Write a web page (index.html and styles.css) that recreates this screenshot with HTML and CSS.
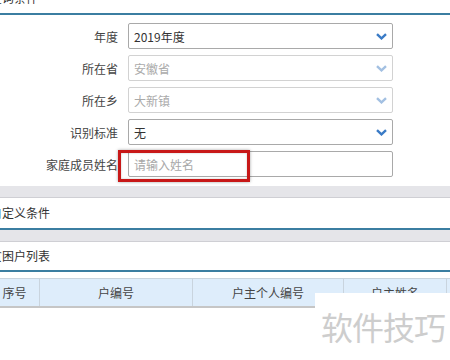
FILE: index.html
```html
<!DOCTYPE html>
<html lang="zh-CN">
<head>
    <meta charset="UTF-8">
    <title>查询条件</title>
    <link rel="stylesheet" href="styles.css">
</head>
<body>
    <div class="page">
        <div class="panel-head">查询条件</div>
        <div class="form">
            <div class="row">
                <label>年度</label>
                <div class="select">2019年度<svg class="arrow" width="11" height="7" viewBox="0 0 11 7"><path d="M1 1.2 L5.5 5.4 L10 1.2" fill="none" stroke="#3a7bc6" stroke-width="2.4"/></svg></div>
            </div>
            <div class="row">
                <label>所在省</label>
                <div class="select disabled">安徽省<svg class="arrow" width="11" height="7" viewBox="0 0 11 7"><path d="M1 1.2 L5.5 5.4 L10 1.2" fill="none" stroke="#a3c0e2" stroke-width="2.4"/></svg></div>
            </div>
            <div class="row">
                <label>所在乡</label>
                <div class="select disabled">大新镇<svg class="arrow" width="11" height="7" viewBox="0 0 11 7"><path d="M1 1.2 L5.5 5.4 L10 1.2" fill="none" stroke="#a3c0e2" stroke-width="2.4"/></svg></div>
            </div>
            <div class="row">
                <label>识别标准</label>
                <div class="select">无<svg class="arrow" width="11" height="7" viewBox="0 0 11 7"><path d="M1 1.2 L5.5 5.4 L10 1.2" fill="none" stroke="#3a7bc6" stroke-width="2.4"/></svg></div>
            </div>
            <div class="row">
                <label>家庭成员姓名</label>
                <input class="text" type="text" placeholder="请输入姓名">
                <div class="mark"></div>
            </div>
        </div>
        <div class="divider"></div>
        <div class="panel-head">自定义条件</div>
        <div class="divider"></div>
        <div class="panel-head short">贫困户列表</div>
        <table class="grid">
            <tr>
                <th class="c1">序号</th>
                <th class="c2">户编号</th>
                <th class="c3">户主个人编号</th>
                <th class="c4">户主姓名</th>
                <th class="c5"></th>
            </tr>
        </table>
    </div>
    <div class="watermark">软件技巧</div>
</body>
</html>
```

FILE: styles.css
```css
body {
    margin: 0;
    background-color: #ffffff;
    font-family: "Noto Sans CJK SC", "Microsoft YaHei", sans-serif;
    font-size: 12px;
    color: #333333;
    overflow: hidden;
}
.page {
    margin: -17px 0 0 -10px;
    width: 480px;
}
.panel-head {
    height: 30px;
    line-height: 30px;
    border-bottom: 2px solid #3b7ea1;
    color: #333333;
}
.panel-head.short {
    height: 28px;
    line-height: 28px;
}
.form {
    padding: 8px 0 9px 0;
}
.row {
    display: flex;
    align-items: center;
    height: 26px;
    margin-bottom: 6px;
    position: relative;
}
.row:last-child {
    margin-bottom: 0;
}
.row label {
    width: 138px;
    padding-right: 10px;
    box-sizing: border-box;
    text-align: right;
    color: #444444;
}
.select, .text {
    width: 265px;
    height: 26px;
    box-sizing: border-box;
    border: 1px solid #a9a9a9;
    border-radius: 2px;
    padding: 0 5px;
    font-family: inherit;
    font-size: 12px;
    color: #333333;
}
.select {
    display: flex;
    align-items: center;
    justify-content: space-between;
    padding-right: 5px;
}
.select.disabled {
    border-color: #d2d2d2;
    color: #aaaaaa;
}
.text {
    outline: none;
}
.text::placeholder {
    color: #a8a8a8;
}
.mark {
    position: absolute;
    left: 128px;
    top: -1px;
    width: 132px;
    height: 32px;
    box-sizing: border-box;
    border: 3px solid #c81818;
    box-shadow: 0 0 3px rgba(0, 0, 0, 0.35), inset 0 0 2px rgba(0, 0, 0, 0.25);
}
.divider {
    height: 11px;
    background-color: #e5e5e9;
    border-bottom: 1px solid #cfcfd4;
}
.grid {
    margin-top: 6px;
    border-collapse: collapse;
    table-layout: fixed;
    width: 483px;
}
.grid th {
    height: 27px;
    padding: 0;
    background-color: #deedfb;
    border-top: 1px solid #c9d4de;
    border-left: 1px solid #c9d4de;
    border-bottom: 2px solid #c6c6c6;
    font-weight: normal;
    color: #444444;
    text-align: center;
}
.grid .c1 { width: 49px; border-left: none; }
.grid .c2 { width: 152px; }
.grid .c3 { width: 150px; }
.grid .c4 { width: 102px; }
.grid .c5 { width: 30px; }
.watermark {
    position: absolute;
    left: 315px;
    top: 293px;
    width: 135px;
    height: 67px;
    background-color: #ffffff;
    color: #cdcdcd;
    font-size: 32px;
    line-height: 67px;
    padding-left: 6px;
    box-sizing: border-box;
    letter-spacing: -1px;
}
```
